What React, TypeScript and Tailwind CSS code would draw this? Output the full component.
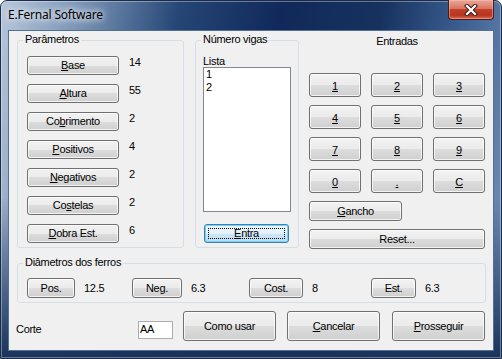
import React from 'react'

type BtnProps = {
  w: number
  h: number
  children: React.ReactNode
  focused?: boolean
  className?: string
}

// Windows 7 push button
function WinButton({ children, focused, className = '' }: BtnProps) {
  if (focused) {
    return (
      <div className={`flex items-center justify-center rounded-[3px] border border-[#3c7fb1] bg-[linear-gradient(#eef7fc_0%,#e2f1fa_50%,#cfe7f6_50%,#bcdcf2_100%)] shadow-[inset_0_0_0_1px_#6fd2f6] p-[3px] ${className}`}>
        <div className="flex h-full w-full items-center justify-center border border-dotted border-black">{children}</div>
      </div>
    )
  }
  return (
    <div className={`flex items-center justify-center rounded-[3px] border border-[#707070] bg-[linear-gradient(#f2f2f2_0%,#ebebeb_50%,#dddddd_50%,#cfcfcf_100%)] shadow-[inset_0_0_0_1px_rgba(255,255,255,0.75)] ${className}`}>
      {children}
    </div>
  )
}

function U({ children }: { children: React.ReactNode }) {
  return <span className="underline underline-offset-[1px]">{children}</span>
}

function GroupLabel({ text }: { text: string }) {
  return (
    <span className="absolute -top-[8px] left-[5px] bg-[#f0f0f0] px-[2px] leading-[13px]">{text}</span>
  )
}

export default function App() {
  const params: { label: React.ReactNode; value: string }[] = [
    { label: <><U>B</U>ase</>, value: '14' },
    { label: <><U>A</U>ltura</>, value: '55' },
    { label: <>Co<U>b</U>rimento</>, value: '2' },
    { label: <><U>P</U>ositivos</>, value: '4' },
    { label: <><U>N</U>egativos</>, value: '2' },
    { label: <>Co<U>s</U>telas</>, value: '2' },
    { label: <><U>D</U>obra Est.</>, value: '6' },
  ]

  const keys = ['1', '2', '3', '4', '5', '6', '7', '8', '9', '0', '.', 'C']

  const diam = [
    { label: 'Pos.', value: '12.5', bw: 'w-[48px]', cw: 'w-[105px]' },
    { label: 'Neg.', value: '6.3', bw: 'w-[50px]', cw: 'w-[117px]' },
    { label: 'Cost.', value: '8', bw: 'w-[54px]', cw: 'w-[122px]' },
    { label: 'Est.', value: '6.3', bw: 'w-[45px]', cw: 'w-[90px]' },
  ]

  return (
    <div className="h-[359px] w-[502px] bg-white font-['Liberation_Sans',Arial,sans-serif] text-[11px] tracking-[-0.3px] text-black">
      {/* window frame */}
      <div className="flex h-full w-full flex-col rounded-t-[7px] border border-[#1c2c47] bg-[linear-gradient(to_bottom,rgba(20,45,85,0)_0%,rgba(20,45,85,0)_55%,#19335d_100%),linear-gradient(100deg,#b7c7da_0%,#7d97b8_14%,#254676_32%,#10295a_50%,#17325f_68%,#3a5d8f_82%,#7c99c0_100%)] shadow-[inset_0_0_0_1px_rgba(255,255,255,0.35)]">
        {/* title bar */}
        <div className="flex h-[29px] shrink-0 items-start justify-between pl-[7px] pr-[7px]">
          <span className="mt-[5px] font-['Noto_Sans',sans-serif] text-[12px] tracking-[-0.2px] [text-shadow:0_0_6px_#fff,0_0_10px_#fff]">
            E.Fernal Software
          </span>
          <div className="-mt-px flex h-[20px] w-[46px] items-center justify-center rounded-b-[4px] border border-t-0 border-[#4a1d1a] bg-[linear-gradient(#e9a99b_0%,#d8745f_45%,#c2402a_50%,#b8341f_80%,#d96a4c_100%)] shadow-[inset_0_0_0_1px_rgba(255,200,190,0.45)]">
            <svg width="14" height="12" viewBox="0 0 14 12">
              <path d="M3 2 L11 10 M11 2 L3 10" stroke="#3a1a1a" strokeWidth="4.2" strokeLinecap="square" />
              <path d="M3 2 L11 10 M11 2 L3 10" stroke="#ffffff" strokeWidth="2.2" strokeLinecap="square" />
            </svg>
          </div>
        </div>

        {/* client area */}
        <div className="mx-[7px] mb-[7px] flex flex-1 flex-col border border-[#55708f] bg-[#f0f0f0] pl-[8px] pt-[4px]">
          <div className="flex items-start">
            {/* Parametros */}
            <div className="relative mt-[5px] h-[208px] w-[167px] rounded-[3px] border border-[#d5dfe5] pl-[9px] pt-[15px]">
              <GroupLabel text="Parâmetros" />
              <div className="flex flex-col gap-[9px]">
                {params.map((p, i) => (
                  <div key={i} className="flex items-center">
                    <WinButton w={92} h={19} className="h-[19px] w-[92px]">
                      <span>{p.label}</span>
                    </WinButton>
                    <span className="ml-[10px] -mt-[6px]">{p.value}</span>
                  </div>
                ))}
              </div>
            </div>

            {/* Numero vigas */}
            <div className="relative ml-[11px] mt-[5px] flex h-[208px] w-[104px] flex-col rounded-[3px] border border-[#d5dfe5] pl-[7px] pt-[14px]">
              <GroupLabel text="Número vigas" />
              <span className="leading-[13px]">Lista</span>
              <div className="mt-[-1px] h-[145px] w-[88px] border border-[#828790] bg-white pl-[2px] leading-[13px]">
                <div>1</div>
                <div>2</div>
              </div>
              <WinButton w={85} h={19} focused className="ml-[1px] mt-[12px] h-[19px] w-[85px]">
                <span><U>E</U>ntra</span>
              </WinButton>
            </div>

            {/* Entradas */}
            <div className="ml-[10px] flex w-[176px] flex-col">
              <span className="text-center leading-[13px]">Entradas</span>
              <div className="mt-[25px] grid grid-cols-3 gap-x-[10px] gap-y-[8px]">
                {keys.map((k) => (
                  <WinButton key={k} w={52} h={24} className="h-[24px] w-[52px]">
                    <span className="mt-[2px]"><U>{k}</U></span>
                  </WinButton>
                ))}
              </div>
              <WinButton w={93} h={20} className="mt-[8px] h-[20px] w-[93px]">
                <span><U>G</U>ancho</span>
              </WinButton>
              <WinButton w={176} h={20} className="mt-[8px] h-[20px] w-[176px]">
                <span>Reset...</span>
              </WinButton>
            </div>
          </div>

          {/* Diametros dos ferros */}
          <div className="relative mt-[14px] flex h-[40px] w-[469px] rounded-[3px] border border-[#d5dfe5] pl-[9px] pt-[14px]">
            <GroupLabel text="Diâmetros dos ferros" />
            {diam.map((d) => (
              <div key={d.label} className={`flex h-[20px] items-center ${d.cw}`}>
                <WinButton w={48} h={20} className={`h-[20px] ${d.bw}`}>
                  <span>{d.label}</span>
                </WinButton>
                <span className="ml-[9px]">{d.value}</span>
              </div>
            ))}
          </div>

          {/* bottom row */}
          <div className="mt-[8px] flex h-[30px] items-center">
            <span className="-ml-px mt-[6px] w-[122px]">Corte</span>
            <div className="mt-[7px] flex h-[18px] w-[35px] items-center border border-[#abadb3] bg-white pl-[1px]">AA</div>
            <WinButton w={93} h={30} className="ml-[10px] h-[30px] w-[93px]">
              <span>Como usar</span>
            </WinButton>
            <WinButton w={93} h={30} className="ml-[11px] h-[30px] w-[93px]">
              <span><U>C</U>ancelar</span>
            </WinButton>
            <WinButton w={93} h={30} className="ml-[12px] h-[30px] w-[93px]">
              <span><U>P</U>rosseguir</span>
            </WinButton>
          </div>
        </div>
      </div>
    </div>
  )
}
